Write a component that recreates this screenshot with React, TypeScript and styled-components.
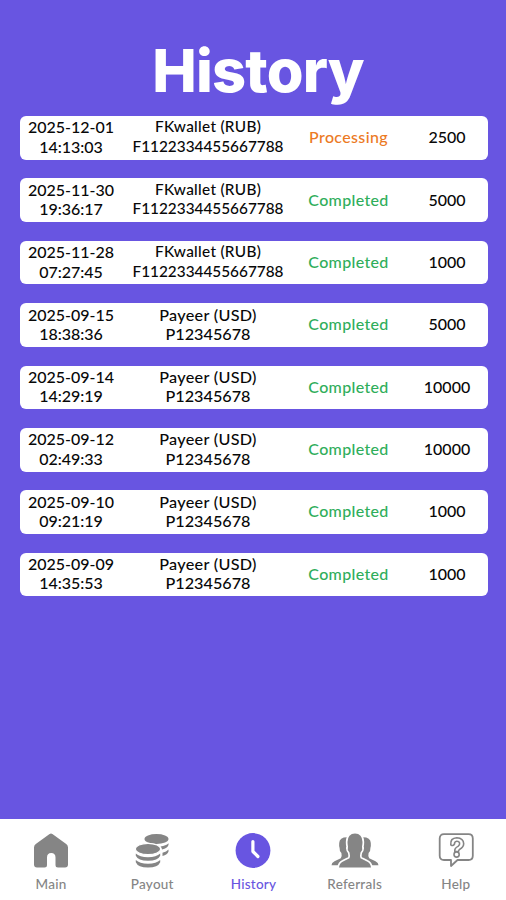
import React from "react";
import styled, { createGlobalStyle } from "styled-components";

const GlobalStyle = createGlobalStyle`
* {
  box-sizing: border-box;
}
body {
  margin: 0;
  background-color: #6855E1;
}
`

const Screen = styled.div`
display: flex;
flex-direction: column;
height: 100vh;
background-color: #6855E1;
font-family: Lato, "Noto Sans", sans-serif;
font-weight: 500;
color: #080808;
`

const Title = styled.h1`
margin: 0;
padding: 34px 0 0 10px;
height: 116px;
line-height: 72px;
text-align: center;
font-family: Inter, sans-serif;
font-size: 59.5px;
font-weight: 800;
letter-spacing: -0.8px;
color: white;
`

const List = styled.div`
flex: 1;
display: flex;
flex-direction: column;
gap: 18.7px;
padding: 0 18px 0 20px;
`

const Row = styled.div`
display: grid;
grid-template-columns: 102px 172px 109px 1fr;
align-items: center;
height: 43.7px;
padding-bottom: 2px;
border-radius: 6px;
background-color: white;
text-align: center;
white-space: nowrap;
font-size: 16px;
line-height: 19.4px;
`

const Wallet = styled.div<{ $small: boolean }>`
font-size: ${p => p.$small ? "15.35px" : "16.2px"};
`

const WalletName = styled.div`
letter-spacing: 0.3px;
`

const Status = styled.div<{ $done: boolean }>`
letter-spacing: 0.35px;
color: ${p => p.$done ? "#2FAE5B" : "#EC7A24"};
`

const Amount = styled.div`
padding-left: 3px;
`

const TabBar = styled.nav`
display: grid;
grid-template-columns: repeat(5, 1fr);
height: 81.5px;
background-color: white;
`

const Tab = styled.div<{ $active?: boolean }>`
display: flex;
flex-direction: column;
align-items: center;
padding: 14px 0 0 1px;
gap: 5px;
font-size: 13.5px;
line-height: 20px;
letter-spacing: 0.25px;
color: ${p => p.$active ? "#6855E1" : "#858585"};
`

const Icon = styled.svg`
display: block;
height: 36px;
width: 48px;
`

const rows = [
  { date: "2025-12-01", time: "14:13:03", wallet: "FKwallet (RUB)", account: "F1122334455667788", status: "Processing", amount: 2500 },
  { date: "2025-11-30", time: "19:36:17", wallet: "FKwallet (RUB)", account: "F1122334455667788", status: "Completed", amount: 5000 },
  { date: "2025-11-28", time: "07:27:45", wallet: "FKwallet (RUB)", account: "F1122334455667788", status: "Completed", amount: 1000 },
  { date: "2025-09-15", time: "18:38:36", wallet: "Payeer (USD)", account: "P12345678", status: "Completed", amount: 5000 },
  { date: "2025-09-14", time: "14:29:19", wallet: "Payeer (USD)", account: "P12345678", status: "Completed", amount: 10000 },
  { date: "2025-09-12", time: "02:49:33", wallet: "Payeer (USD)", account: "P12345678", status: "Completed", amount: 10000 },
  { date: "2025-09-10", time: "09:21:19", wallet: "Payeer (USD)", account: "P12345678", status: "Completed", amount: 1000 },
  { date: "2025-09-09", time: "14:35:53", wallet: "Payeer (USD)", account: "P12345678", status: "Completed", amount: 1000 },
];

const HomeIcon = () => (
  <Icon viewBox="0 0 48 36" fill="currentColor">
    <path d="M22.6 1Q24 0 25.400 1L39.200 11Q41 12.400 41 14.500V31.500Q41 34.500 38 34.500H31Q28.500 34.500 28.500 32V24.500Q28.500 20 24.200 20Q20 20 20 24.500V32Q20 34.500 17.500 34.500H10Q7 34.500 7 31.500V14.500Q7 12.400 8.800 11Z" />
  </Icon>
);

const CoinsIcon = () => (
  <Icon viewBox="0 0 48 36" fill="currentColor">
    <ellipse cx="28.500" cy="6" rx="12" ry="5" />
    <path d="M40.500 10.300V12Q39.500 15.200 34 16.400Q33.700 14.800 32.500 13.600Q38 12.800 40.500 10.300Z" />
    <path d="M40.500 16.500V18.500Q39.500 21.700 34.500 22.900V19.800Q38.500 18.800 40.500 16.500Z" />
    <ellipse cx="20" cy="16" rx="12.700" ry="5.700" stroke="white" strokeWidth="1.2" />
    <path d="M7.800 20.600Q11.500 24.200 20 24.200T32.200 20.600V22.700Q30 27.700 20 27.700T7.800 22.700Z" />
    <path d="M7.800 27Q11.500 30.700 20 30.700T32.200 27V29.200Q30 34.500 20 34.500T7.800 29.200Z" />
  </Icon>
);

const ClockIcon = () => (
  <Icon viewBox="0 0 48 36">
    <circle cx="24" cy="17.500" r="17.400" fill="currentColor" />
    <path d="M23.900 8.500V18.500L28.900 23.500" fill="none" stroke="white" strokeWidth="3.200" strokeLinecap="round" strokeLinejoin="round" />
  </Icon>
);

const personPath = "M18 4.300Q8.500 3.500 8.200 10Q7.900 13 8.600 15Q8.300 18 10.400 20Q11.300 23.800 9.800 25.200L3.500 28.300Q.5 29.800 .5 32.300H12L20 25V6Z";

const PeopleIcon = () => (
  <Icon viewBox="0 0 48 36" fill="currentColor">
    <path d={personPath} />
    <path transform="translate(48 0) scale(-1 1)" d={personPath} />
    <path stroke="white" strokeWidth="3.400" paintOrder="stroke" d="M24 .5Q31.200 .5 31.500 9Q31.500 11.500 31 13.500Q32.100 16.500 29.500 19.500Q28.500 23 29.500 25.200L36 28.500Q39.500 30 40 34.500H8Q8.500 30 12 28.500L18.500 25.200Q19.500 23 18.500 19.500Q15.900 16.500 17 13.500Q16.500 11.500 16.500 9Q16.800 .5 24 .5Z" />
  </Icon>
);

const HelpIcon = () => (
  <Icon viewBox="0 0 48 36" fill="none" stroke="currentColor" strokeWidth="1.800" strokeLinejoin="round">
    <path d="M12 1.200H36.500Q40.800 1.200 40.800 5.500V22.700Q40.800 27 36.500 27H25.500L19 33V27H12Q7.700 27 7.700 22.700V5.500Q7.700 1.200 12 1.200Z" />
    <path strokeWidth="1.600" d="M18.800 11.800Q18 5 24.800 4.700Q31.500 5 31.700 10.800Q31.500 14.500 27.800 16.200Q26.700 16.800 26.500 18.500H22.800Q22.300 15.200 26 13.400Q28 12 27.600 10.100Q27 8.200 24.700 8.300Q22.300 8.700 22.500 11Q21 13.500 18.800 11.800Z" />
    <circle strokeWidth="1.600" cx="24.600" cy="21.500" r="2.600" />
  </Icon>
);

const App: React.FC = () => {
  return (
    <Screen>
      <GlobalStyle />
      <Title>History</Title>
      <List>
        {rows.map((row) => (
          <Row key={row.date}>
            <div>{row.date}<br />{row.time}</div>
            <Wallet $small={row.account.length > 10}>
              <WalletName>{row.wallet}</WalletName>
              {row.account}
            </Wallet>
            <Status $done={row.status === "Completed"}>{row.status}</Status>
            <Amount>{row.amount}</Amount>
          </Row>
        ))}
      </List>
      <TabBar>
        <Tab><HomeIcon />Main</Tab>
        <Tab><CoinsIcon />Payout</Tab>
        <Tab $active><ClockIcon />History</Tab>
        <Tab><PeopleIcon />Referrals</Tab>
        <Tab><HelpIcon />Help</Tab>
      </TabBar>
    </Screen>
  );
};

export default App;
